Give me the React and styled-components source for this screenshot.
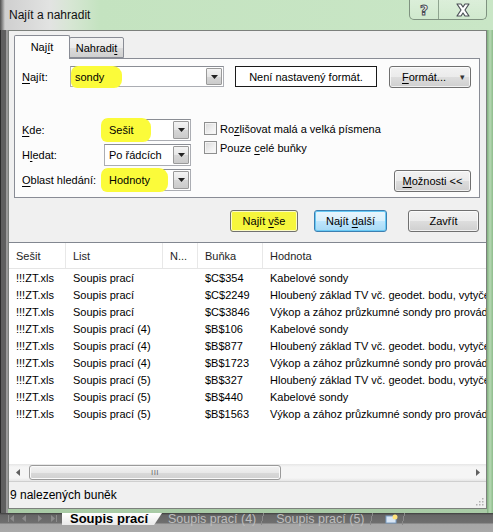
import React from "react";
import styled, { createGlobalStyle } from "styled-components";

const GlobalStyle = createGlobalStyle`
  html, body {
    margin: 0;
    padding: 0;
    background: #5c5c5c;
    overflow: hidden;
  }
  body {
    font-family: "Liberation Sans", Arial, sans-serif;
    font-size: 11px;
    color: #000;
  }
  u {
    text-decoration-thickness: 1px;
    text-underline-offset: 2px;
  }
`;

const rows = [
  ["!!!ZT.xls", "Soupis prací", "$C$354", "Kabelové sondy"],
  ["!!!ZT.xls", "Soupis prací", "$C$2249", "Hloubený základ TV vč. geodet. bodu, vytyčení"],
  ["!!!ZT.xls", "Soupis prací", "$C$3846", "Výkop a zához průzkumné sondy pro provádění"],
  ["!!!ZT.xls", "Soupis prací (4)", "$B$106", "Kabelové sondy"],
  ["!!!ZT.xls", "Soupis prací (4)", "$B$877", "Hloubený základ TV vč. geodet. bodu, vytyčení"],
  ["!!!ZT.xls", "Soupis prací (4)", "$B$1723", "Výkop a zához průzkumné sondy pro provádění"],
  ["!!!ZT.xls", "Soupis prací (5)", "$B$327", "Hloubený základ TV vč. geodet. bodu, vytyčení"],
  ["!!!ZT.xls", "Soupis prací (5)", "$B$440", "Kabelové sondy"],
  ["!!!ZT.xls", "Soupis prací (5)", "$B$1563", "Výkop a zához průzkumné sondy pro provádění"],
];

const Arrow = () => (
  <svg width="7" height="4" viewBox="0 0 7 4">
    <path d="M0 0h7L3.5 4z" fill="#222" />
  </svg>
);

export default function App() {
  return (
    <>
      <GlobalStyle />
      <Screen>
        <Window>
          <TitleBar>
            <Title>Najít a nahradit</Title>
            <CaptionButtons>
              <CaptionButton $w={28}>
                <HelpGlyph>?</HelpGlyph>
              </CaptionButton>
              <CaptionButton $w={47}>
                <svg width="16" height="14" viewBox="0 0 16 14">
                  <path
                    d="M2 1h4l2 3 2-3h4l-4 6 4 6h-4l-2-3-2 3H2l4-6z"
                    fill="#fff"
                    stroke="#4a4f55"
                    strokeWidth="1.2"
                    strokeLinejoin="round"
                  />
                </svg>
              </CaptionButton>
            </CaptionButtons>
          </TitleBar>

          <Client>
            <TabStrip>
              <Tab $active>
                <span>
                  Naj<u>í</u>t
                </span>
              </Tab>
              <Tab>
                <span>
                  Nahradi<u>t</u>
                </span>
              </Tab>
            </TabStrip>

            <Panel>
              <FindRow>
                <Label $w={48}>
                  <u>N</u>ajít:
                </Label>
                <Combo $w={154}>
                  <Marker>sondy</Marker>
                  <DropButton>
                    <Arrow />
                  </DropButton>
                </Combo>
                <FormatBox>Není nastavený formát.</FormatBox>
                <Button $w={82} $split>
                  <span>
                    <u>F</u>ormát...
                  </span>
                  <SplitArrow>▾</SplitArrow>
                </Button>
              </FindRow>

              <OptionsRow>
                <OptionGrid>
                  <Label $w={82}>
                    <u>K</u>de:
                  </Label>
                  <Combo $w={87} $h={22}>
                    <Marker $wide>Sešit</Marker>
                    <DropButton>
                      <Arrow />
                    </DropButton>
                  </Combo>
                  <Label $w={82}>
                    H<u>l</u>edat:
                  </Label>
                  <Combo $w={87} $h={22}>
                    <span>Po řádcích</span>
                    <DropButton>
                      <Arrow />
                    </DropButton>
                  </Combo>
                  <Label $w={82}>
                    <u>O</u>blast hledání:
                  </Label>
                  <Combo $w={87} $h={22}>
                    <Marker $wide>Hodnoty</Marker>
                    <DropButton>
                      <Arrow />
                    </DropButton>
                  </Combo>
                </OptionGrid>

                <Checks>
                  <CheckRow>
                    <CheckBox />
                    <span>
                      Ro<u>z</u>lišovat malá a velká písmena
                    </span>
                  </CheckRow>
                  <CheckRow>
                    <CheckBox />
                    <span>
                      Pouze <u>c</u>elé buňky
                    </span>
                  </CheckRow>
                </Checks>

                <OptionsButton $w={77}>
                  <span>
                    <u>M</u>ožnosti &lt;&lt;
                  </span>
                </OptionsButton>
              </OptionsRow>
            </Panel>

            <ButtonRow>
              <Button $w={68} $variant="marked">
                <span>
                  Najít <u>v</u>še
                </span>
              </Button>
              <Button $w={73} $variant="default">
                <span>
                  Najít <u>d</u>alší
                </span>
              </Button>
              <Button $w={71}>
                <span>Zavřít</span>
              </Button>
            </ButtonRow>

            <Results>
              <HeaderRow>
                <HeadCell>Sešit</HeadCell>
                <HeadCell>List</HeadCell>
                <HeadCell>N...</HeadCell>
                <HeadCell>Buňka</HeadCell>
                <HeadCell $last>Hodnota</HeadCell>
              </HeaderRow>
              {rows.map((r, i) => (
                <DataRow key={i}>
                  {r.map((c, j) => (
                    <Cell key={j} $col={j}>
                      {c}
                    </Cell>
                  ))}
                </DataRow>
              ))}
              <Filler />
              <HScroll>
                <ScrollArrow>
                  <svg width="4" height="7" viewBox="0 0 4 7">
                    <path d="M4 0v7L0 3.5z" fill="#606060" />
                  </svg>
                </ScrollArrow>
                <Track>
                  <Thumb>
                    <Grip>III</Grip>
                  </Thumb>
                </Track>
                <ScrollArrow>
                  <svg width="4" height="7" viewBox="0 0 4 7">
                    <path d="M0 0v7l4-3.5z" fill="#606060" />
                  </svg>
                </ScrollArrow>
              </HScroll>
              <StatusBar>
                <span>9 nalezených buněk</span>
                <SizeGrip>
                  <svg width="8" height="8" viewBox="0 0 8 8">
                    <g fill="#b0b0b0">
                      <rect x="6" y="0" width="1.5" height="1.5" />
                      <rect x="3" y="3" width="1.5" height="1.5" />
                      <rect x="6" y="3" width="1.5" height="1.5" />
                      <rect x="0" y="6" width="1.5" height="1.5" />
                      <rect x="3" y="6" width="1.5" height="1.5" />
                      <rect x="6" y="6" width="1.5" height="1.5" />
                    </g>
                  </svg>
                </SizeGrip>
              </StatusBar>
            </Results>
          </Client>
        </Window>

        <SheetBar>
          <SheetNav>
            <svg width="56" height="9" viewBox="0 0 56 9">
              <g fill="#8c8c8c">
                <rect x="4" y="1" width="1" height="7" />
                <path d="M10 1v7L6 4.5z" />
                <path d="M22 1v7l-4-3.5z" />
                <path d="M34 1v7l4-3.5z" />
                <path d="M47 1v7l4-3.5z" />
                <rect x="52" y="1" width="1" height="7" />
              </g>
            </svg>
          </SheetNav>
          <SheetTab $active>Soupis prací</SheetTab>
          <SheetTab>Soupis prací (4)</SheetTab>
          <SheetTab>Soupis prací (5)</SheetTab>
          <SheetTab $icon>
            <svg width="14" height="10" viewBox="0 0 14 10">
              <rect x="1" y="2" width="10" height="7" fill="#d9e6f4" stroke="#7b9ec4" />
              <circle cx="10" cy="3" r="2.5" fill="#ffe27a" />
            </svg>
          </SheetTab>
        </SheetBar>
      </Screen>
    </>
  );
}

const Screen = styled.div`
  width: 493px;
  height: 532px;
  display: flex;
  flex-direction: column;
`;

const Window = styled.div`
  height: 513px;
  display: flex;
  flex-direction: column;
  padding: 0 6px 4px 8px;
  box-sizing: border-box;
  background:
    linear-gradient(90deg, #2a2a2a 0 1px, #5f5f5f 1px 6px, #9a9a9a 6px 8px, transparent 8px),
    linear-gradient(90deg, transparent 487px, #7fae7e 487px, #b7d9b4 490px, #8dbb8b 493px),
    linear-gradient(180deg, #c7e2c3 0, #b9d8b6 60%, #a9cba6 100%);
`;

const TitleBar = styled.div`
  height: 30px;
  margin: 0 -6px 0 -8px;
  padding: 0 6px 0 9px;
  display: flex;
  align-items: flex-start;
  background:
    linear-gradient(90deg, #4e4e4e 0, #cfcfcf 5px, #e2e3e2 50px, #d7e6d4 70px, #c4e3c0 100px, #c9e6c6 100%);
`;

const Title = styled.div`
  font-size: 12px;
  line-height: 30px;
  color: #111;
`;

const CaptionButtons = styled.div`
  margin-left: auto;
  display: flex;
  height: 19px;
  border: 1px solid #7f9280;
  border-top: none;
  border-radius: 0 0 5px 5px;
  overflow: hidden;
  background: linear-gradient(180deg, rgba(255, 255, 255, 0.35), rgba(255, 255, 255, 0.15));
`;

const CaptionButton = styled.div`
  width: ${(p) => p.$w}px;
  display: flex;
  align-items: center;
  justify-content: center;
  & + & {
    border-left: 1px solid #8fa48f;
  }
`;

const HelpGlyph = styled.span`
  font-family: "DejaVu Sans", sans-serif;
  font-weight: bold;
  font-size: 14px;
  color: #fff;
  -webkit-text-stroke: 1px #4a4f55;
`;

const Client = styled.div`
  flex: 1;
  display: flex;
  flex-direction: column;
  background: #f0f0f0;
  border: 1px solid #7c807c;
  min-height: 0;
`;

const TabStrip = styled.div`
  display: flex;
  align-items: flex-end;
  height: 23px;
  margin: 4px 0 0 5px;
  position: relative;
  z-index: 1;
`;

const Tab = styled.div`
  box-sizing: border-box;
  width: ${(p) => (p.$active ? 56 : 55)}px;
  height: ${(p) => (p.$active ? 24 : 21)}px;
  margin-bottom: ${(p) => (p.$active ? -1 : 0)}px;
  margin-left: ${(p) => (p.$active ? 0 : -1)}px;
  border: 1px solid #898c95;
  border-bottom: ${(p) => (p.$active ? "none" : "1px solid #898c95")};
  border-radius: 2px 2px 0 0;
  display: flex;
  align-items: center;
  justify-content: center;
  padding-bottom: ${(p) => (p.$active ? 2 : 0)}px;
  background: ${(p) =>
    p.$active ? "#fcfcfc" : "linear-gradient(180deg, #f2f2f2 0%, #ebebeb 50%, #dddddd 51%, #cfcfcf 100%)"};
`;

const Panel = styled.div`
  height: 140px;
  box-sizing: border-box;
  margin: 0 6px 0 5px;
  border: 1px solid #898c95;
  background: #fcfcfc;
  padding: 7px 8px 0 7px;
  display: flex;
  flex-direction: column;
`;

const FindRow = styled.div`
  display: flex;
  align-items: center;
  height: 21px;
`;

const Label = styled.div`
  width: ${(p) => p.$w}px;
  flex: none;
  white-space: nowrap;
`;

const Combo = styled.div`
  width: ${(p) => p.$w}px;
  height: ${(p) => p.$h || 21}px;
  box-sizing: border-box;
  border: 1px solid #abadb3;
  border-top-color: #8a8d94;
  background: #fff;
  display: flex;
  align-items: center;
  padding-left: 4px;
  flex: none;
`;

const DropButton = styled.div`
  margin-left: auto;
  width: 16px;
  height: calc(100% - 2px);
  margin-right: 1px;
  box-sizing: border-box;
  border: 1px solid #9a9a9a;
  border-radius: 1px;
  background: linear-gradient(180deg, #f4f4f4 0%, #e6e6e6 50%, #d6d6d6 51%, #cbcbcb 100%);
  display: flex;
  align-items: center;
  justify-content: center;
`;

const Marker = styled.span`
  position: relative;
  z-index: 0;
  &::before {
    content: "";
    position: absolute;
    top: ${(p) => (p.$wide ? -6 : -5)}px;
    bottom: ${(p) => (p.$wide ? -6 : -5)}px;
    left: ${(p) => (p.$wide ? -8 : -4)}px;
    right: ${(p) => (p.$wide ? -18 : -18)}px;
    background: #fbfb3a;
    border-radius: 7px 9px 8px 6px;
    z-index: -1;
  }
`;

const FormatBox = styled.div`
  width: 142px;
  height: 21px;
  box-sizing: border-box;
  margin-left: 11px;
  border: 1px solid #1a1a1a;
  background: #fff;
  display: flex;
  align-items: center;
  justify-content: center;
`;

const Button = styled.div`
  width: ${(p) => p.$w}px;
  height: 22px;
  box-sizing: border-box;
  flex: none;
  border: 1px solid ${(p) => (p.$variant === "default" ? "#3c7fb1" : "#707070")};
  border-radius: 3px;
  display: flex;
  align-items: center;
  justify-content: ${(p) => (p.$split ? "space-between" : "center")};
  padding: ${(p) => (p.$split ? "0 5px 0 12px" : "0")};
  margin-left: ${(p) => (p.$split ? "auto" : "0")};
  white-space: nowrap;
  box-shadow: inset 0 0 0 1px ${(p) => (p.$variant === "default" ? "#68c9f4" : "rgba(255,255,255,0.7)")};
  background: ${(p) =>
    p.$variant === "marked"
      ? "#f6f63c"
      : p.$variant === "default"
      ? "linear-gradient(180deg, #eaf6fd 0%, #d9f0fc 50%, #bee6fd 51%, #a7d9f5 100%)"
      : "linear-gradient(180deg, #f2f2f2 0%, #ebebeb 50%, #dddddd 51%, #cfcfcf 100%)"};
`;

const SplitArrow = styled.span`
  font-size: 9px;
  color: #333;
`;

const OptionsRow = styled.div`
  display: flex;
  margin-top: 32px;
`;

const OptionGrid = styled.div`
  display: grid;
  grid-template-columns: 82px 87px;
  grid-auto-rows: 22px;
  row-gap: 3px;
  align-items: center;
`;

const Checks = styled.div`
  display: flex;
  flex-direction: column;
  gap: 6px;
  margin-left: 13px;
  padding-top: 3px;
`;

const CheckRow = styled.div`
  display: flex;
  align-items: center;
  gap: 3px;
  height: 13px;
  white-space: nowrap;
`;

const CheckBox = styled.span`
  width: 13px;
  height: 13px;
  box-sizing: border-box;
  border: 1px solid #8e8f8f;
  background: linear-gradient(135deg, #d8d8d8 0%, #f0f0f0 60%, #fcfcfc 100%);
  box-shadow: inset 0 0 0 1px #f4f4f4;
  flex: none;
`;

const OptionsButton = styled(Button)`
  margin-left: auto;
  align-self: flex-end;
  margin-bottom: -1px;
`;

const ButtonRow = styled.div`
  display: flex;
  justify-content: flex-end;
  gap: 16px;
  margin-top: 12px;
  padding-right: 7px;
  & > :last-child {
    margin-left: 5px;
  }
`;

const Results = styled.div`
  flex: 1;
  margin-top: 10px;
  background: #fff;
  border-top: 1px solid #828790;
  display: flex;
  flex-direction: column;
  min-height: 0;
  overflow: hidden;
`;

const columns = "57px 97px 35px 65px 1fr";

const HeaderRow = styled.div`
  display: grid;
  grid-template-columns: ${columns};
  height: 25px;
  flex: none;
  border-bottom: 1px solid #e5e5e5;
`;

const HeadCell = styled.div`
  padding-left: 7px;
  display: flex;
  align-items: center;
  color: #1e1e1e;
  border-right: ${(p) => (p.$last ? "none" : "1px solid #e8e8e8")};
  white-space: nowrap;
  overflow: hidden;
`;

const DataRow = styled.div`
  display: grid;
  grid-template-columns: ${columns};
  height: 17px;
  flex: none;
  align-items: center;
`;

const Cell = styled.div`
  padding-left: 7px;
  grid-column: ${(p) => (p.$col >= 2 ? p.$col + 2 : p.$col + 1)};
  white-space: nowrap;
  overflow: hidden;
`;

const Filler = styled.div`
  flex: 1;
`;

const HScroll = styled.div`
  height: 17px;
  flex: none;
  display: flex;
  align-items: center;
  background: linear-gradient(180deg, #e6e6e6 0, #f5f5f5 3px, #f5f5f5 14px, #e6e6e6 100%);
`;

const ScrollArrow = styled.div`
  width: 17px;
  height: 17px;
  flex: none;
  display: flex;
  align-items: center;
  justify-content: center;
`;

const Track = styled.div`
  flex: 1;
  height: 100%;
  display: flex;
  align-items: center;
  padding-left: 3px;
`;

const Thumb = styled.div`
  width: 252px;
  height: 15px;
  box-sizing: border-box;
  border: 1px solid #9a9a9a;
  border-radius: 3px;
  background: linear-gradient(180deg, #f3f3f3 0%, #e8e8e8 50%, #d9d9d9 51%, #d0d0d0 100%);
  box-shadow: inset 0 0 0 1px #fafafa;
  display: flex;
  align-items: center;
  justify-content: center;
`;

const Grip = styled.span`
  font-size: 8px;
  letter-spacing: 0.5px;
  color: #6d6d6d;
`;

const StatusBar = styled.div`
  height: 27px;
  flex: none;
  box-sizing: border-box;
  border-top: 1px solid #cfcfcf;
  background: #f0f0f0;
  display: flex;
  align-items: center;
  padding: 0 2px 0 1px;
  font-size: 12px;
`;

const SizeGrip = styled.div`
  margin-left: auto;
  align-self: flex-end;
  margin-bottom: 2px;
  display: flex;
`;

const SheetBar = styled.div`
  flex: 1;
  display: flex;
  align-items: flex-start;
  padding-left: 4px;
  background: linear-gradient(180deg, #3d3d3d 0, #666 2px, #6f6f6f 10px, #a6a6a6 11px, #a9a9a9 100%);
  font-size: 12.5px;
`;

const SheetNav = styled.div`
  width: 58px;
  height: 11px;
  display: flex;
  align-items: center;
`;

const SheetTab = styled.div`
  height: 12px;
  padding: 0 ${(p) => (p.$icon ? 12 : 14)}px 0 ${(p) => (p.$active ? 8 : 10)}px;
  margin-left: ${(p) => (p.$active ? 0 : -4)}px;
  display: flex;
  align-items: center;
  white-space: nowrap;
  line-height: 12px;
  font-size: ${(p) => (p.$active ? 13 : 12.5)}px;
  color: ${(p) => (p.$active ? "#000" : "#bdbdbd")};
  font-weight: ${(p) => (p.$active ? "bold" : "normal")};
  background: ${(p) =>
    p.$active
      ? "linear-gradient(180deg, #ffffff 0%, #e9e9e9 100%)"
      : "linear-gradient(100deg, transparent calc(100% - 9px), #8a8a8a calc(100% - 9px), #8a8a8a calc(100% - 8px), transparent calc(100% - 8px))"};
  clip-path: ${(p) => (p.$active ? "polygon(0 0, 100% 0, calc(100% - 8px) 100%, 0 100%)" : "none")};
  position: relative;
  z-index: ${(p) => (p.$active ? 1 : 0)};
`;
